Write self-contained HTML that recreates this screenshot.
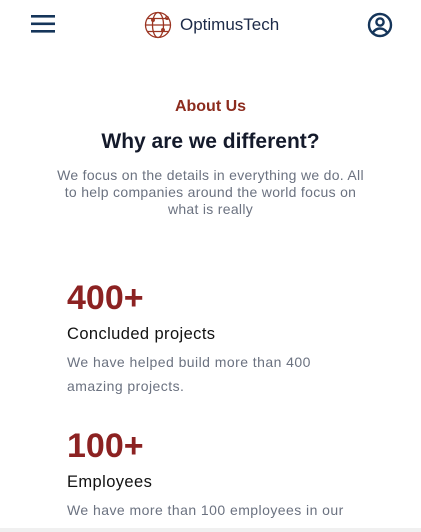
<!DOCTYPE html>
<html><head><meta charset="utf-8"><style>
*{margin:0;padding:0;box-sizing:border-box}
body{width:421px;height:532px;overflow:hidden;background:#fff;font-family:"Liberation Sans",Arial,sans-serif;position:relative}
.a{position:absolute;white-space:nowrap}
</style></head><body>
<svg class="a" style="left:31px;top:15px" width="25" height="18"><rect x="0" y="0" width="24" height="2.6" fill="#15355a"/><rect x="0" y="7.5" width="24" height="2.6" fill="#15355a"/><rect x="0" y="15" width="24" height="2.6" fill="#15355a"/></svg>
<svg class="a" style="left:144px;top:11px" width="28" height="28" viewBox="0 0 28 28" fill="none" stroke="#9b3522" stroke-width="1.3"><circle cx="14" cy="14" r="12.5"/><ellipse cx="14" cy="14" rx="5.5" ry="12.5"/><line x1="1.5" y1="14" x2="26.5" y2="14"/><path d="M3.5 7.5 H24.5 M3.5 20.5 H24.5"/><circle cx="9" cy="9" r="1.3"/><circle cx="19" cy="19" r="1.3"/><circle cx="23" cy="7" r="1.3"/></svg>
<div class="a" style="left:180px;top:15px;font-size:17px;color:#1c2a48">OptimusTech</div>
<svg class="a" style="left:367px;top:12px" width="26" height="26" viewBox="0 0 26 26" fill="none" stroke="#15355a" stroke-width="2.4"><circle cx="13" cy="13" r="11"/><circle cx="13" cy="10" r="3.6"/><path d="M6 20.5c2-3 4.3-4 7-4s5 1 7 4"/></svg>
<div class="a" style="left:0;width:421px;text-align:center;top:98px;font-size:16px;font-weight:bold;color:#8c2c1e">About Us</div>
<div class="a" style="left:0;width:421px;text-align:center;top:130px;font-size:21px;font-weight:bold;color:#141a2b">Why are we different?</div>
<div class="a" style="left:0;width:421px;text-align:center;top:167px;font-size:14px;letter-spacing:0.3px;line-height:17px;color:#6b7280;white-space:normal;padding:0 52px">We focus on the details in everything we do. All to help companies around the world focus on what is really</div>
<div class="a" style="left:67px;top:279px;font-size:34px;font-weight:bold;color:#8c2222">400+</div>
<div class="a" style="left:67px;top:325px;font-size:16.5px;letter-spacing:0.4px;color:#111">Concluded projects</div>
<div class="a" style="left:67px;top:351px;font-size:14px;letter-spacing:0.45px;line-height:23.5px;color:#6b7280">We have helped build more than 400<br>amazing projects.</div>
<div class="a" style="left:67px;top:427px;font-size:34px;font-weight:bold;color:#8c2222">100+</div>
<div class="a" style="left:67px;top:473px;font-size:16.5px;letter-spacing:0.4px;color:#111">Employees</div>
<div class="a" style="left:67px;top:499px;font-size:14px;letter-spacing:0.45px;line-height:23.5px;color:#6b7280">We have more than 100 employees in our</div>
<div class="a" style="left:0;top:528px;width:421px;height:4px;background:#f0f0f0"></div>
</body></html>
